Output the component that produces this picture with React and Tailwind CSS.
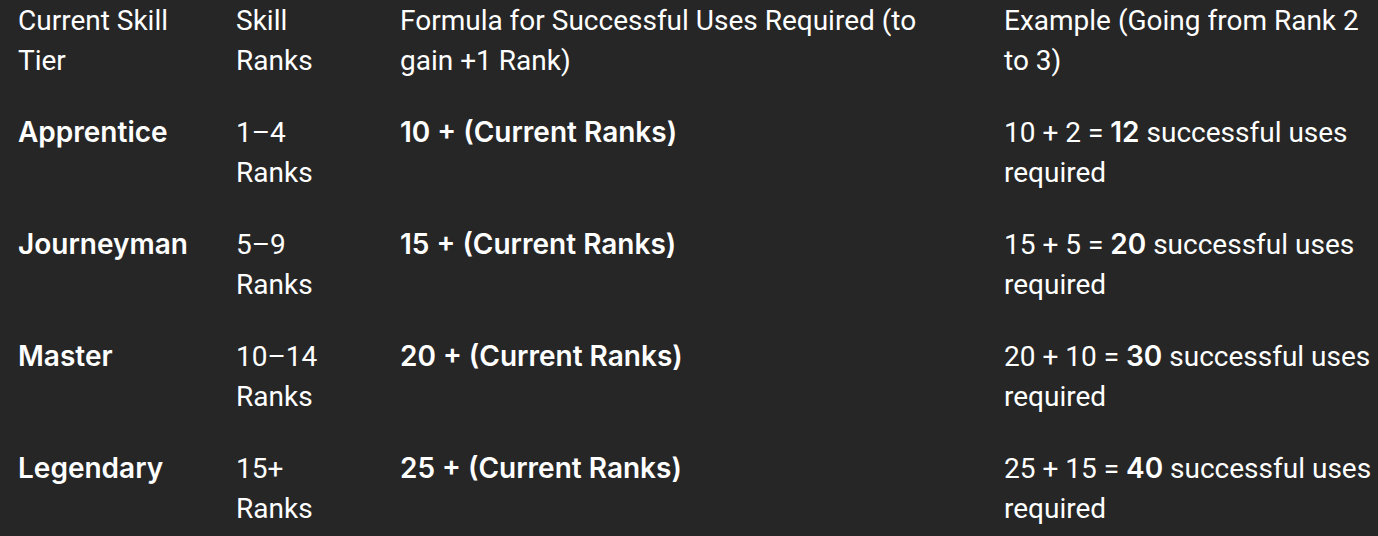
import React from 'react'

const rows = [
  { tier: 'Apprentice', ranks: '1–4', base: '10', ex: '10 + 2 =', total: '12' },
  { tier: 'Journeyman', ranks: '5–9', base: '15', ex: '15 + 5 =', total: '20' },
  { tier: 'Master', ranks: '10–14', base: '20', ex: '20 + 10 =', total: '30' },
  { tier: 'Legendary', ranks: '15+', base: '25', ex: '25 + 15 =', total: '40' },
]

// bold runs use Inter, its width is closer to the reference's bold face
const bold = "font-['Inter','Roboto',sans-serif] font-semibold leading-none"

export default function App() {
  return (
    <div className="w-[1378px] h-[536px] overflow-hidden bg-[#262626] text-white text-[28px] leading-[40px] pt-px font-['Roboto','Liberation_Sans',sans-serif]">
      <div className="grid grid-cols-[218px_164px_604px_1fr] gap-y-8 pl-[18px] whitespace-nowrap">
        <div>Current Skill<br />Tier</div>
        <div>Skill<br />Ranks</div>
        <div>Formula for Successful Uses Required (to<br />gain +1 Rank)</div>
        <div>Example (Going from Rank 2<br />to 3)</div>

        {rows.map((r) => (
          <React.Fragment key={r.tier}>
            <div><span className={bold}>{r.tier}</span></div>
            <div>{r.ranks}<br />Ranks</div>
            <div><span className={bold}>{r.base} + (Current Ranks)</span></div>
            <div>
              {r.ex} <span className={bold}>{r.total}</span> successful uses
              <br />required
            </div>
          </React.Fragment>
        ))}
      </div>
    </div>
  )
}
